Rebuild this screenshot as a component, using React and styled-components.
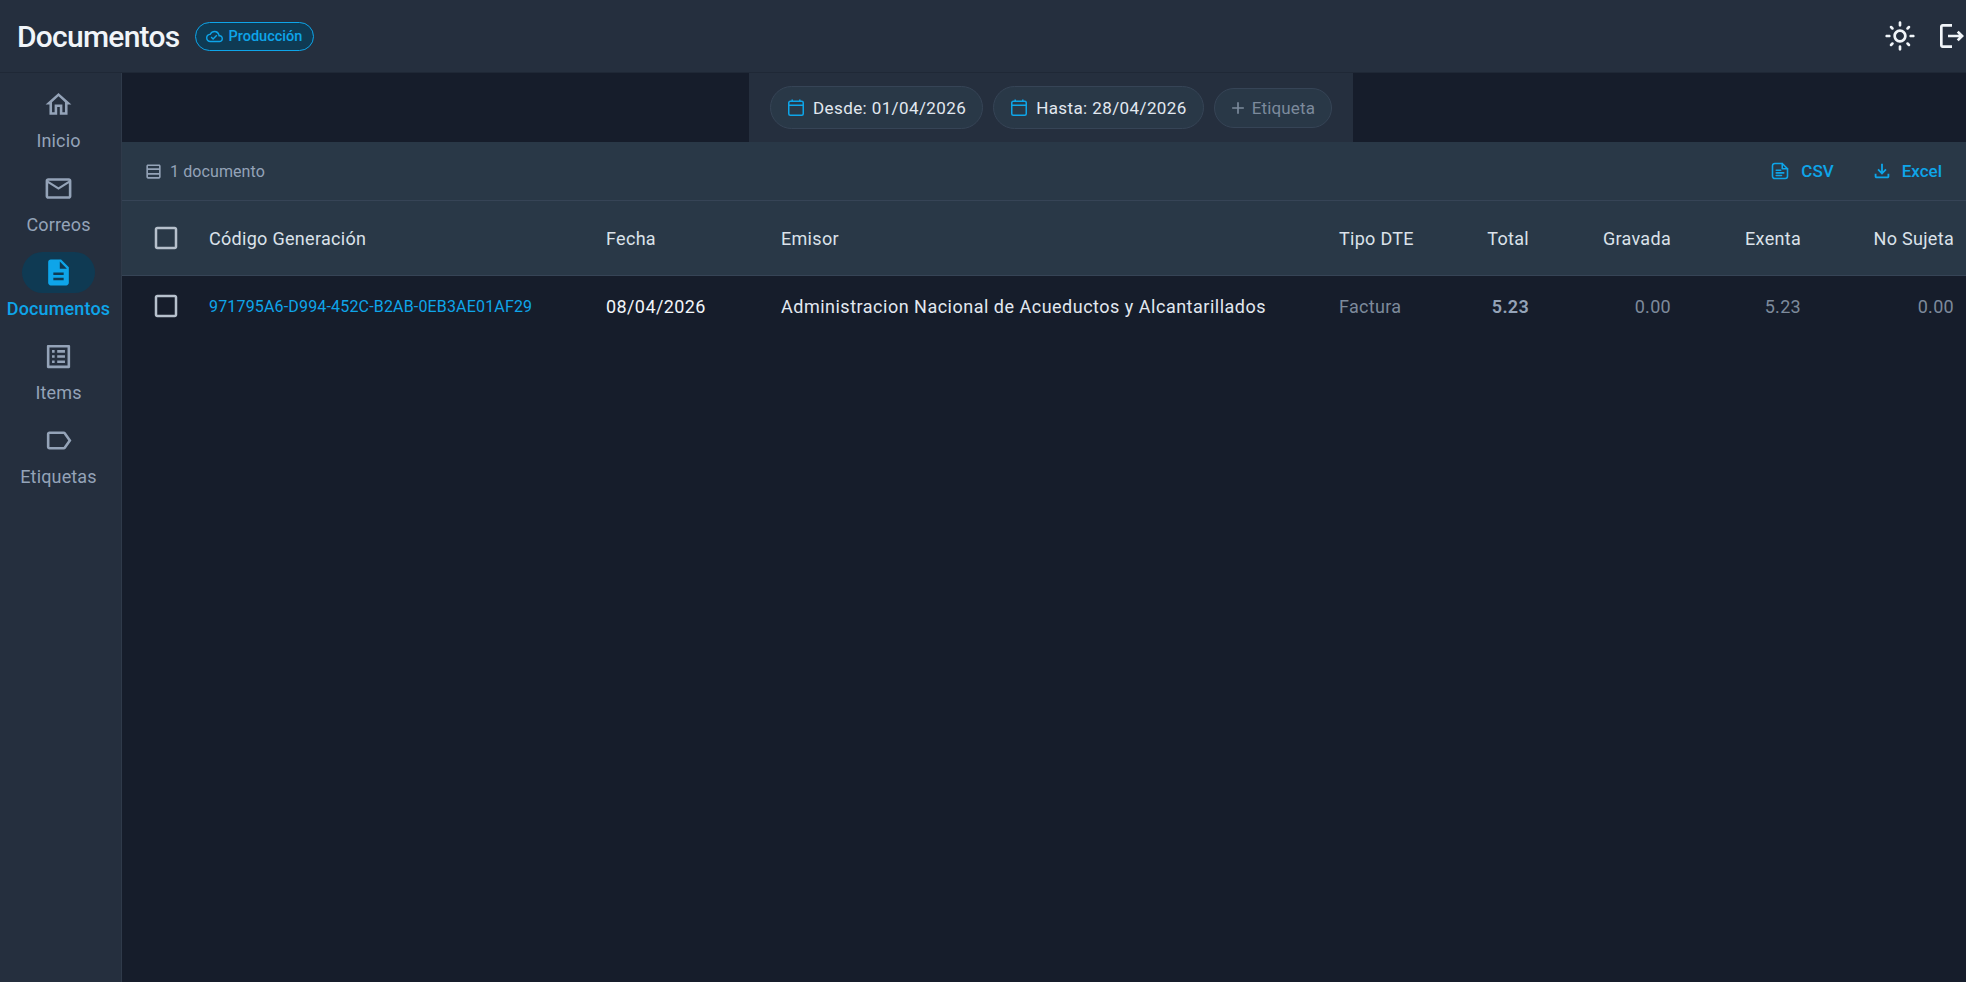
import React from "react";
import styled, { createGlobalStyle } from "styled-components";
import {
  MdOutlineHome,
  MdMailOutline,
  MdDescription,
  MdOutlineListAlt,
  MdOutlineLabel,
  MdOutlineCloudDone,
  MdAdd,
  MdOutlineLightMode,
  MdOutlineLogout,
  MdOutlineTableRows,
  MdOutlineFileDownload,
  MdCheckBoxOutlineBlank,
} from "react-icons/md";

const GlobalStyle = createGlobalStyle`
  html, body { margin: 0; padding: 0; height: 100%; overflow: hidden; }
  body { background: #161d2b; font-family: Roboto, "Liberation Sans", sans-serif; }
`;

const Page = styled.div`
  display: flex;
  flex-direction: column;
  height: 982px;
  width: 1966px;
  overflow: hidden;
`;

const TopBar = styled.header`
  display: flex;
  align-items: center;
  flex: none;
  height: 73px;
  box-sizing: border-box;
  padding-left: 17px;
  background: #252f3e;
  border-bottom: 1px solid #1f2836;
`;

const PageTitle = styled.h1`
  margin: 0;
  font-size: 30px;
  font-weight: 500;
  letter-spacing: -0.75px;
  color: #f1f5f9;
`;

const EnvBadge = styled.span`
  display: flex;
  align-items: center;
  gap: 5px;
  height: 29px;
  margin-left: 16px;
  padding: 0 11px 0 10px;
  box-sizing: border-box;
  border: 1px solid #0ea5e9;
  border-radius: 15px;
  background: #0f3a53;
  color: #0ea5e9;
  font-size: 14.5px;
  font-weight: 500;
`;

const TopActions = styled.div`
  display: flex;
  align-items: center;
  gap: 20px;
  margin-left: auto;
  margin-right: -2px;
  color: #f1f5f9;
`;

const Body = styled.div`
  display: flex;
  flex: 1;
  min-height: 0;
`;

const Sidebar = styled.nav`
  flex: none;
  width: 117px;
  padding: 11px 4px 0 0;
  background: #252f3e;
  border-right: 1px solid #2f3a4a;
`;

const NavItem = styled.div`
  display: flex;
  flex-direction: column;
  align-items: center;
  height: 84px;
  color: ${(p) => (p.$active ? "#0ea5e9" : "#94a3b8")};
  font-size: 18px;
  letter-spacing: 0.15px;
  font-weight: ${(p) => (p.$active ? 500 : 400)};
`;

const NavPill = styled.span`
  display: flex;
  align-items: center;
  justify-content: center;
  width: 73px;
  height: 41px;
  border-radius: 21px;
  background: ${(p) => (p.$active ? "#0f3a53" : "transparent")};
  font-size: 31px;
`;

const NavLabel = styled.span`
  margin-top: 5px;
  line-height: 22px;
  white-space: nowrap;
`;

const Main = styled.main`
  flex: 1;
  min-width: 0;
  display: flex;
  flex-direction: column;
`;

const FilterStrip = styled.div`
  display: flex;
  justify-content: center;
  flex: none;
  height: 69px;
`;

const FilterPanel = styled.div`
  display: flex;
  align-items: center;
  gap: 10px;
  width: 604px;
  box-sizing: border-box;
  padding: 0 21px;
  margin-left: 14px;
  background: #252f3e;
`;

const Chip = styled.div`
  display: flex;
  align-items: center;
  gap: ${(p) => (p.$muted ? "4px" : "9px")};
  height: ${(p) => (p.$muted ? "40px" : "43px")};
  box-sizing: border-box;
  padding: 0 16px 0 ${(p) => (p.$muted ? "13px" : "17px")};
  border: 1px solid #364456;
  border-radius: 22px;
  background: #293847;
  color: ${(p) => (p.$muted ? "#7c8a9c" : "#e2e8f0")};
  font-size: 17px;
  font-weight: ${(p) => (p.$muted ? 400 : 450)};
  white-space: nowrap;
  letter-spacing: ${(p) => (p.$muted ? "0.15px" : "0.4px")};
  svg {
    font-size: 20px;
    color: ${(p) => (p.$muted ? "#7c8a9c" : "#0ea5e9")};
  }
`;

const Toolbar = styled.div`
  display: flex;
  align-items: center;
  flex: none;
  height: 59px;
  box-sizing: border-box;
  padding: 0 24px 0 22px;
  background: #293847;
  border-bottom: 1px solid #364456;
`;

const CountLabel = styled.span`
  display: flex;
  align-items: center;
  gap: 7px;
  color: #94a3b8;
  font-size: 16px;
  letter-spacing: 0.1px;
  svg { font-size: 19px; }
`;

const ToolbarLinks = styled.div`
  display: flex;
  align-items: center;
  gap: 37px;
  margin-left: auto;
`;

const ExportLink = styled.span`
  display: flex;
  align-items: center;
  gap: ${(p) => p.$gap || "12px"};
  color: #0ea5e9;
  font-size: 17px;
  font-weight: 500;
`;

const Row = styled.div`
  display: grid;
  grid-template-columns: 87px 397px 175px 558px 101px 89px 142px 130px 153px;
  align-items: center;
  flex: none;
  height: ${(p) => (p.$head ? "75px" : "60px")};
  box-sizing: border-box;
  background: ${(p) => (p.$head ? "#293847" : "transparent")};
  border-bottom: ${(p) => (p.$head ? "1px solid #364456" : "none")};
  color: ${(p) => (p.$head ? "#dbe2ea" : "#7d8a9b")};
  font-size: 18px;
  letter-spacing: 0.3px;
`;

const CheckCell = styled.div`
  display: flex;
  justify-content: flex-end;
  padding-right: 28px;
  font-size: 30px;
  color: #b6c0cc;
  svg { display: block; }
`;

const Cell = styled.div`
  text-align: ${(p) => (p.$right ? "right" : "left")};
  white-space: nowrap;
  color: ${(p) => p.$color || "inherit"};
  font-size: ${(p) => p.$size || "inherit"};
  font-weight: ${(p) => p.$weight || 400};
  letter-spacing: ${(p) => p.$spacing || "inherit"};
`;

const navItems = [
  { label: "Inicio", icon: <MdOutlineHome /> },
  { label: "Correos", icon: <MdMailOutline /> },
  { label: "Documentos", icon: <MdDescription />, active: true },
  { label: "Items", icon: <MdOutlineListAlt /> },
  { label: "Etiquetas", icon: <MdOutlineLabel /> },
];

function CsvIcon() {
  return (
    <svg width="18" height="18" viewBox="0 0 24 24" fill="none" stroke="currentColor" strokeWidth="2.1" strokeLinejoin="round" strokeLinecap="round">
      <path d="M5 2h10l7 7v10a3 3 0 0 1-3 3H5a3 3 0 0 1-3-3V5a3 3 0 0 1 3-3z" />
      <path d="M15 2v7h7" />
      <path d="M7 11h6M7 14.5h10M7 18h7" />
    </svg>
  );
}

function CalendarIcon() {
  return (
    <svg width="16" height="17" viewBox="0 0 16 17" fill="none" stroke="currentColor" strokeWidth="1.5">
      <rect x="0.75" y="2.25" width="14.5" height="14" rx="1.5" />
      <path d="M0.75 6.2h14.5M4.2 0.4v2.4M11.8 0.4v2.4" />
    </svg>
  );
}

function App() {
  return (
    <Page>
      <GlobalStyle />
      <TopBar>
        <PageTitle>Documentos</PageTitle>
        <EnvBadge>
          <MdOutlineCloudDone size={17} />
          Producción
        </EnvBadge>
        <TopActions>
          <MdOutlineLightMode size={32} />
          <MdOutlineLogout size={32} />
        </TopActions>
      </TopBar>
      <Body>
        <Sidebar>
          {navItems.map((item) => (
            <NavItem key={item.label} $active={item.active}>
              <NavPill $active={item.active}>{item.icon}</NavPill>
              <NavLabel>{item.label}</NavLabel>
            </NavItem>
          ))}
        </Sidebar>
        <Main>
          <FilterStrip>
            <FilterPanel>
              <Chip>
                <CalendarIcon />
                Desde: 01/04/2026
              </Chip>
              <Chip>
                <CalendarIcon />
                Hasta: 28/04/2026
              </Chip>
              <Chip $muted>
                <MdAdd />
                Etiqueta
              </Chip>
            </FilterPanel>
          </FilterStrip>
          <Toolbar>
            <CountLabel>
              <MdOutlineTableRows />1 documento
            </CountLabel>
            <ToolbarLinks>
              <ExportLink>
                <CsvIcon />
                CSV
              </ExportLink>
              <ExportLink $gap="9px">
                <MdOutlineFileDownload size={22} />
                Excel
              </ExportLink>
            </ToolbarLinks>
          </Toolbar>
          <Row $head>
            <CheckCell>
              <MdCheckBoxOutlineBlank />
            </CheckCell>
            <Cell>Código Generación</Cell>
            <Cell>Fecha</Cell>
            <Cell>Emisor</Cell>
            <Cell>Tipo DTE</Cell>
            <Cell $right>Total</Cell>
            <Cell $right>Gravada</Cell>
            <Cell $right>Exenta</Cell>
            <Cell $right>No Sujeta</Cell>
          </Row>
          <Row>
            <CheckCell>
              <MdCheckBoxOutlineBlank />
            </CheckCell>
            <Cell $color="#0ea5e9" $size="16px" $spacing="0.17px">
              971795A6-D994-452C-B2AB-0EB3AE01AF29
            </Cell>
            <Cell $color="#f1f5f9" $weight={450} $spacing="0.4px">
              08/04/2026
            </Cell>
            <Cell $color="#e2e8f0" $weight={450} $spacing="0.5px">
              Administracion Nacional de Acueductos y Alcantarillados
            </Cell>
            <Cell>Factura</Cell>
            <Cell $right $weight={600} $color="#94a3b8">
              5.23
            </Cell>
            <Cell $right>0.00</Cell>
            <Cell $right>5.23</Cell>
            <Cell $right>0.00</Cell>
          </Row>
        </Main>
      </Body>
    </Page>
  );
}

export default App;
